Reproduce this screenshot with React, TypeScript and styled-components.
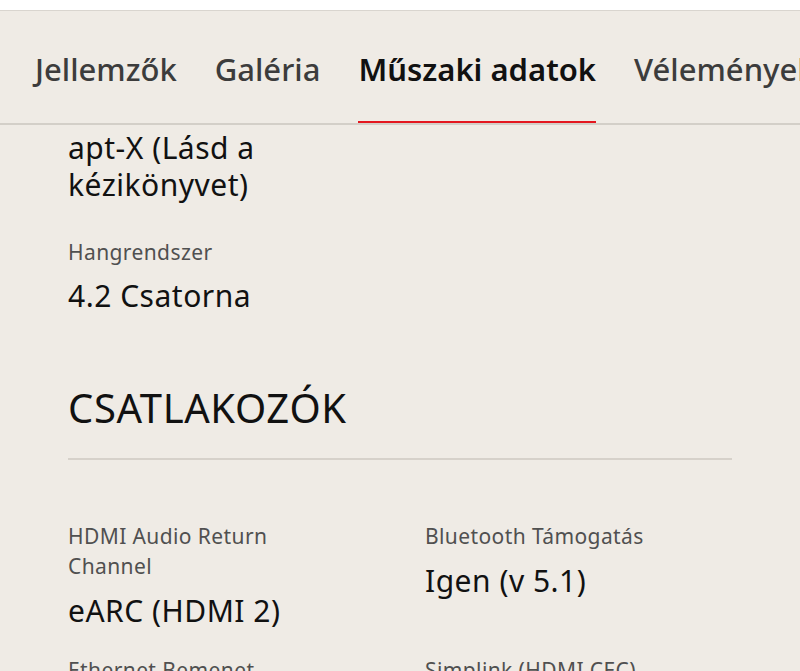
import styled, { createGlobalStyle } from 'styled-components'

const GlobalStyle = createGlobalStyle`
  html, body {
    margin: 0;
    padding: 0;
    background: #efebe5;
    font-family: 'Noto Sans', 'Open Sans', sans-serif;
    color: #111;
  }
  #root {
    height: 671px;
    overflow: hidden;
  }
`

const Page = styled.div`
  display: flex;
  flex-direction: column;
  height: 671px;
  overflow: hidden;
`

const TopStrip = styled.div`
  height: 10px;
  background: #fff;
  border-bottom: 1px solid #d9d5cf;
  flex-shrink: 0;
`

const TabBar = styled.nav`
  display: flex;
  align-items: flex-end;
  gap: 38px;
  height: 112px;
  padding-left: 35px;
  border-bottom: 2px solid #d3cfc8;
  white-space: nowrap;
  overflow: hidden;
  flex-shrink: 0;
`

const Tab = styled.div<{ $active?: boolean }>`
  font-size: 31px;
  font-weight: ${(p) => (p.$active ? 600 : 500)};
  color: ${(p) => (p.$active ? '#111' : '#3c3c3c')};
  padding-bottom: 31px;
  margin-bottom: -2px;
  border-bottom: 4px solid ${(p) => (p.$active ? '#e4171f' : 'transparent')};
`

const Content = styled.main`
  padding: 4px 68px 0;
  width: 664px;
`

const Spec = styled.div`
  margin-bottom: 34px;
`

const Label = styled.div`
  font-size: 21px;
  line-height: 30px;
  letter-spacing: 0.4px;
  color: #505050;
`

const Value = styled.div<{ $first?: boolean }>`
  font-size: 30px;
  line-height: ${(p) => (p.$first ? 37 : 36)}px;
  letter-spacing: 0.5px;
  margin-top: ${(p) => (p.$first ? 0 : 11)}px;
  color: #111;
`

const SectionTitle = styled.h2`
  margin: 69px 0 0;
  font-weight: 400;
  font-size: 40px;
  line-height: 50px;
  letter-spacing: 0.6px;
  color: #111;
  padding-bottom: 25px;
  border-bottom: 2px solid #d6d1ca;
`

const Grid = styled.div`
  display: grid;
  grid-template-columns: 357px 1fr;
  row-gap: 26px;
  padding-top: 61px;
`

const Cell = styled.div`
  padding-right: 80px;

  ${Value} {
    margin-top: 12px;
  }
`

const specs = [
  { label: 'HDMI Audio Return Channel', value: 'eARC (HDMI 2)' },
  { label: 'Bluetooth Támogatás', value: 'Igen (v 5.1)' },
  { label: 'Ethernet Bemenet', value: 'Nem' },
  { label: 'Simplink (HDMI CEC)', value: 'Igen' },
]

export default function App() {
  return (
    <Page>
      <GlobalStyle />
      <TopStrip />
      <TabBar>
        <Tab>Jellemzők</Tab>
        <Tab>Galéria</Tab>
        <Tab $active>Műszaki adatok</Tab>
        <Tab>Vélemények</Tab>
      </TabBar>
      <Content>
        <Spec>
          <Value $first>
            apt-X (Lásd a<br />
            kézikönyvet)
          </Value>
        </Spec>
        <Spec>
          <Label>Hangrendszer</Label>
          <Value>4.2 Csatorna</Value>
        </Spec>
        <SectionTitle>CSATLAKOZÓK</SectionTitle>
        <Grid>
          {specs.map((s) => (
            <Cell key={s.label}>
              <Label>{s.label}</Label>
              <Value>{s.value}</Value>
            </Cell>
          ))}
        </Grid>
      </Content>
    </Page>
  )
}
